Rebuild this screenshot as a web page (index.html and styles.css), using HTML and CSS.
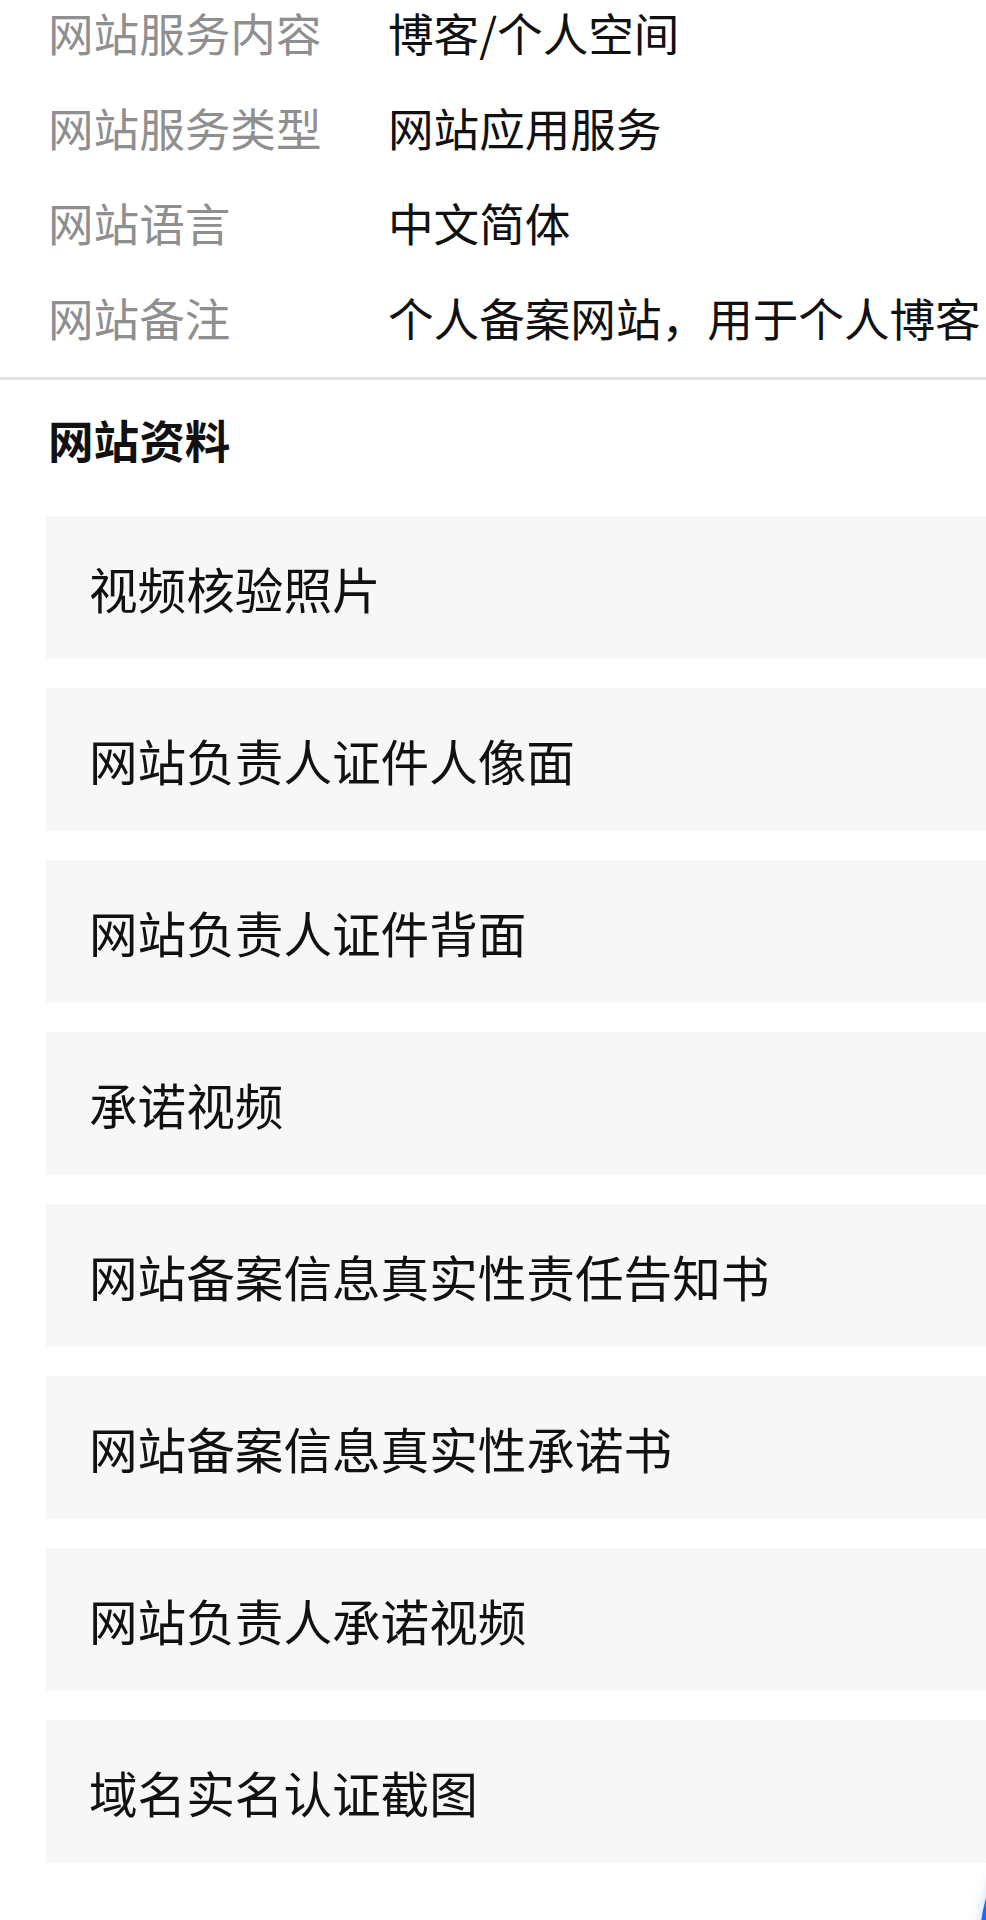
FILE: index.html
```html
<!DOCTYPE html>
<html lang="zh-CN">
<head>
<meta charset="utf-8">
<title>网站资料</title>
<link rel="stylesheet" href="styles.css">
</head>
<body>
<div class="page">
  <div class="info">
    <div class="info-row"><span class="label">网站服务内容</span><span class="value">博客/个人空间</span></div>
    <div class="info-row"><span class="label">网站服务类型</span><span class="value">网站应用服务</span></div>
    <div class="info-row"><span class="label">网站语言</span><span class="value">中文简体</span></div>
    <div class="info-row"><span class="label">网站备注</span><span class="value">个人备案网站，用于个人博客</span></div>
  </div>
  <div class="divider"></div>
  <h2 class="section-title">网站资料</h2>
  <ul class="docs">
    <li class="doc">视频核验照片</li>
    <li class="doc">网站负责人证件人像面</li>
    <li class="doc">网站负责人证件背面</li>
    <li class="doc">承诺视频</li>
    <li class="doc">网站备案信息真实性责任告知书</li>
    <li class="doc">网站备案信息真实性承诺书</li>
    <li class="doc">网站负责人承诺视频</li>
    <li class="doc">域名实名认证截图</li>
  </ul>
  <div class="fab"></div>
</div>
</body>
</html>
```

FILE: styles.css
```css
html, body {
  margin: 0;
  padding: 0;
  background: #ffffff;
}
body {
  width: 986px;
  height: 1920px;
  overflow: hidden;
  font-family: "Noto Sans CJK SC", "Noto Sans", sans-serif;
}
.page {
  position: relative;
  width: 986px;
  height: 1920px;
  overflow: hidden;
}
.info {
  margin-top: -15px;
  padding-left: 48px;
}
.info-row {
  display: flex;
  height: 95px;
  align-items: center;
  font-size: 45.6px;
  line-height: 95px;
  white-space: nowrap;
}
.label {
  width: 340px;
  flex: none;
  color: #8f8f8f;
}
.value {
  color: #111111;
}
.divider {
  margin-top: 12px;
  height: 3px;
  background: #e3e3e3;
}
.section-title {
  margin: 29px 0 0 0;
  padding-left: 48px;
  font-size: 45.6px;
  line-height: 60px;
  height: 60px;
  font-weight: 700;
  color: #111111;
}
.docs {
  list-style: none;
  margin: 47px 0 0 0;
  padding: 0 0 0 46px;
}
.doc {
  height: 143px;
  margin-bottom: 29px;
  background: #f7f7f7;
  display: flex;
  align-items: center;
  padding-left: 43px;
  font-size: 48.6px;
  color: #111111;
  white-space: nowrap;
}
.fab {
  position: absolute;
  left: 980px;
  top: 1790px;
  width: 300px;
  height: 300px;
  border-radius: 50%;
  background: #1b6ef3;
  box-shadow: 0 0 14px rgba(27, 110, 243, 0.25);
}
```
